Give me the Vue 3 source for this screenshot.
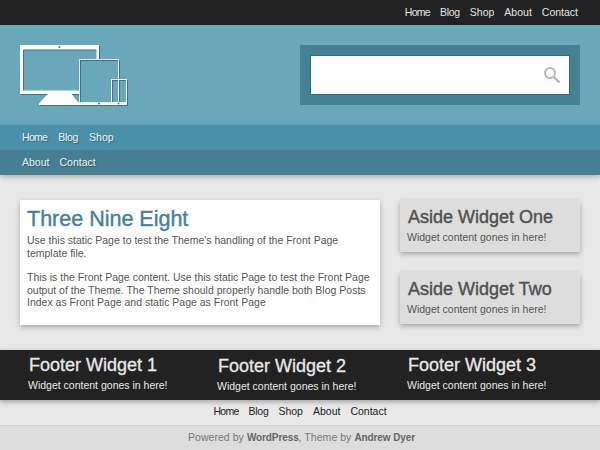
<script setup>
const links = ['Home', 'Blog', 'Shop', 'About', 'Contact']
const footers = ['Footer Widget 1', 'Footer Widget 2', 'Footer Widget 3']
const asides = ['Aside Widget One', 'Aside Widget Two']
</script>

<template>
  <div class="page">
    <nav class="topbar">
      <a v-for="l in links" :key="l" :class="l.toLowerCase()">{{ l }}</a>
    </nav>
    <header class="header">
      <svg class="logo" width="110" height="62" viewBox="0 0 110 62">
        <g class="logo-shadow" transform="translate(1 1)">
          <path d="M0 0h79v14H76.500V4.500H3v41h56V49H0z" />
          <path d="M27.700 49H51.700L58 57h49v3H19v-1.500z" />
          <rect x="59.500" y="14.500" width="39" height="42" fill="none" stroke="#45707f" />
          <rect x="91.500" y="34.500" width="15" height="23" fill="none" stroke="#45707f" />
        </g>
        <path fill="#fff" d="M0 0h79v14H76.500V4.500H3v41h56V49H0z" />
        <path fill="#fff" d="M27.700 49H51.700L58 57h49v3H19v-1.500z" />
        <rect x="59.500" y="14.500" width="39" height="43" fill="none" stroke="#dcebf0" />
        <rect x="91.500" y="34.500" width="15" height="23" fill="none" stroke="#fff" />
        <circle cx="39.500" cy="2" r="1" fill="#4a7080" />
        <circle cx="79" cy="58.500" r="1" fill="#4a7080" />
        <circle cx="98.500" cy="58.500" r="1" fill="#4a7080" />
      </svg>
      <form class="search" @submit.prevent>
        <div class="field">
          <svg width="18" height="18" viewBox="0 0 18 18" fill="none" stroke="#b4b4b4">
            <circle cx="7" cy="7" r="5" stroke-width="2" />
            <path d="M11 11l5.500 5.500" stroke-width="2.400" />
          </svg>
        </div>
      </form>
    </header>
    <nav class="menu">
      <div class="row row-one">
        <a v-for="l in links.slice(0, 3)" :key="l" :class="l.toLowerCase()">{{ l }}</a>
      </div>
      <div class="row row-two">
        <a v-for="l in links.slice(3)" :key="l" :class="l.toLowerCase()">{{ l }}</a>
      </div>
    </nav>
    <main class="main">
      <article class="article">
        <h1>Three Nine Eight</h1>
        <p>Use this static Page to test the Theme's handling of the Front Page template file.</p>
        <p>This is the Front Page content. Use this static Page to test the Front Page output of the Theme. The Theme should properly handle both Blog Posts Index as Front Page and static Page as Front Page</p>
      </article>
      <aside class="aside">
        <section v-for="a in asides" :key="a" class="widget">
          <h2>{{ a }}</h2>
          <p>Widget content gones in here!</p>
        </section>
      </aside>
    </main>
    <section class="footer-widgets">
      <div v-for="f in footers" :key="f" class="footer-widget">
        <h3>{{ f }}</h3>
        <p>Widget content gones in here!</p>
      </div>
    </section>
    <nav class="footer-nav">
      <a v-for="l in links" :key="l" :class="l.toLowerCase()">{{ l }}</a>
    </nav>
    <footer class="credits">
      Powered by&nbsp;<strong>WordPress</strong>, Theme by&nbsp;<strong>Andrew Dyer</strong>
    </footer>
  </div>
</template>

<style>
html, body { margin: 0; overflow: hidden; }
</style>

<style scoped>
.page {
  width: 600px;
  height: 450px;
  background: #e8e8e8;
  font-family: "Liberation Sans", Arial, sans-serif;
  font-size: 10px;
  display: flex;
  flex-direction: column;
  overflow: hidden;
}
h1, h2, h3, p { margin: 0; }
.home { letter-spacing: -0.7px; }
.blog { letter-spacing: -0.3px; }
.topbar {
  height: 25px;
  background: #222;
  display: flex;
  justify-content: flex-end;
  align-items: center;
  gap: 10px;
  padding: 0 22px 2px 0;
  box-sizing: border-box;
  color: #e4e4e4;
  font-size: 10.500px;
}
.header {
  height: 100px;
  background: #69a8bb;
  display: flex;
  justify-content: space-between;
  padding: 20px;
  box-sizing: border-box;
}
.logo { display: block; }
.logo-shadow { fill: #45707f; }
.search {
  width: 280px;
  height: 60px;
  box-sizing: border-box;
  background: #458195;
  padding: 10px;
}
.field {
  height: 40px;
  box-sizing: border-box;
  background: #fff;
  border: 1px solid #38687a;
  display: flex;
  align-items: center;
  justify-content: flex-end;
  padding-right: 8px;
}
.menu {
  box-shadow: 0 2px 5px rgba(0, 0, 0, 0.25);
  color: #eef5f7;
  font-size: 10.500px;
  position: relative;
}
.row {
  height: 25px;
  box-sizing: border-box;
  display: flex;
  align-items: center;
  gap: 10px;
  padding: 0 0 2px 22px;
  text-shadow: 1px 1px 1px rgba(0, 0, 0, 0.3);
}
.row-one { background: #4a90a8; gap: 11px; }
.row-two { background: #457f91; }
.main {
  display: flex;
  gap: 20px;
  padding: 25px 20px;
  height: 175px;
  box-sizing: border-box;
}
.article {
  width: 360px;
  height: 125px;
  box-sizing: border-box;
  background: #fff;
  padding: 7px;
  box-shadow: 0 2px 5px rgba(0, 0, 0, 0.3);
  color: #555;
  font-size: 10.500px;
  line-height: 12.500px;
}
.article h1 {
  color: #45829a;
  font-size: 21.500px;
  line-height: 24px;
  font-weight: 400;
  -webkit-text-stroke: 0.4px #45829a;
  margin-bottom: 3px;
}
.article p + p { margin-top: 12px; }
.aside {
  width: 180px;
  display: flex;
  flex-direction: column;
  gap: 20px;
}
.widget {
  height: 52px;
  box-sizing: border-box;
  background: #ddd;
  padding: 6px 7px;
  box-shadow: 0 2px 5px rgba(0, 0, 0, 0.3);
  color: #555;
}
.widget h2 {
  font-size: 18px;
  line-height: 22px;
  font-weight: 400;
  color: #505050;
  -webkit-text-stroke: 0.4px #505050;
  margin-left: 1px;
}
.widget p { margin-top: 3px; font-size: 10.500px; line-height: 13px; }
.footer-widgets {
  height: 50px;
  background: #222;
  display: grid;
  grid-template-columns: 189px 190px 190px;
  padding-left: 28px;
  color: #e8e8e8;
  box-shadow: 0 2px 5px rgba(0, 0, 0, 0.3);
  position: relative;
}
.footer-widget h3 {
  font-size: 18px;
  line-height: 22px;
  font-weight: 400;
  -webkit-text-stroke: 0.3px #e8e8e8;
  margin: 4px 0 3px 1px;
}
.footer-widget p { font-size: 10.500px; line-height: 13px; }
.footer-widget:nth-child(2) { padding-top: 1px; }
.footer-nav {
  height: 25px;
  box-sizing: border-box;
  padding-bottom: 3px;
  display: flex;
  justify-content: center;
  align-items: center;
  gap: 10px;
  color: #222;
  font-size: 10.500px;
}
.credits {
  height: 25px;
  box-sizing: border-box;
  padding-bottom: 2px;
  background: #ddd;
  border-top: 1px solid #d2d2d2;
  display: flex;
  justify-content: center;
  align-items: center;
  color: #777;
  font-size: 10.500px;
  letter-spacing: 0.05px;
  white-space: pre;
}
.credits strong { color: #666; font-size: 10px; letter-spacing: -0.1px; }
</style>
